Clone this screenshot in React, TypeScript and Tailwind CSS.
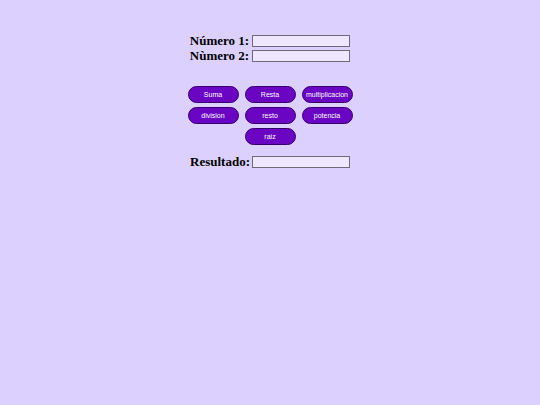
import { useState } from "react"

const buttons = [
  ["Suma", "Resta", "multiplicacion"],
  ["division", "resto", "potencia"],
  ["raiz"],
]

function Field({ label }: { label: string }) {
  return (
    <div className="flex items-center justify-center h-[15px]">
      <span className="font-bold text-[13px] leading-none text-black mr-[3px]">{label}</span>
      <input className="w-[98px] h-[12px] bg-[#efe6ff] border border-[#6f6a78] outline-none" />
    </div>
  )
}

export default function App() {
  const [res] = useState("")
  return (
    <div
      className="min-h-screen h-[405px] bg-[#dcd0fe] pt-[33px]"
      style={{ fontFamily: '"Liberation Serif", "Times New Roman", serif' }}
    >
      <div className="flex flex-col items-center">
        <Field label="Número 1:" />
        <Field label="Nùmero 2:" />

        {/* botones */}
        <div className="mt-[23px] flex flex-col items-center gap-[4px]">
          {buttons.map((row, i) => (
            <div key={i} className="flex gap-[6px]">
              {row.map((b) => (
                <button
                  key={b}
                  className="w-[51px] h-[17px] rounded-full bg-[#6a05c4] border border-[#35006e] text-white text-[7px] leading-none"
                  style={{ fontFamily: '"Liberation Sans", Arial, sans-serif' }}
                >
                  {b}
                </button>
              ))}
            </div>
          ))}
        </div>

        <div className="mt-[9px] flex items-center justify-center h-[15px]">
          <span className="font-bold text-[13px] leading-none text-black mr-[2px]">Resultado:</span>
          <input readOnly value={res} className="w-[98px] h-[12px] bg-[#efe6ff] border border-[#6f6a78] outline-none" />
        </div>
      </div>
    </div>
  )
}
